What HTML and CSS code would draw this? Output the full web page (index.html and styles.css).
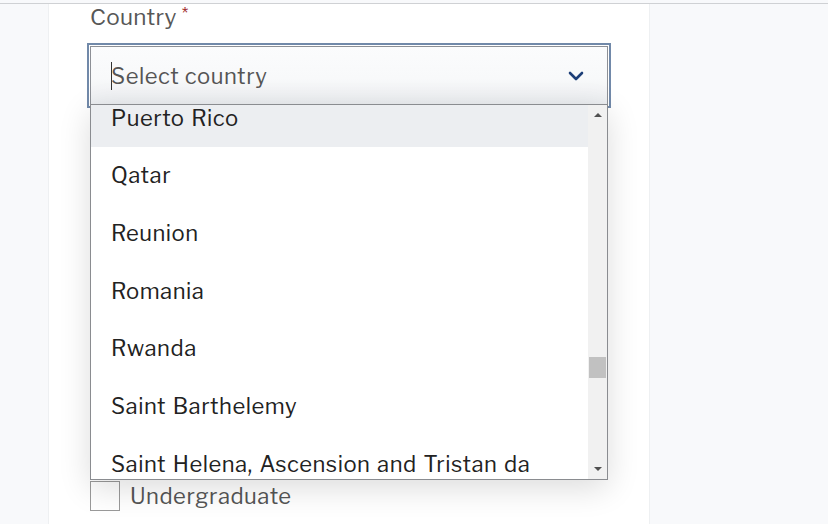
FILE: index.html
```html
<!DOCTYPE html>
<html lang="en">
<head>
<meta charset="utf-8">
<title>Country select</title>
<link rel="stylesheet" href="styles.css">
</head>
<body>
<div class="page">
  <aside class="side side-left"></aside>
  <main class="content">
    <div class="field">
      <label class="label">Country <span class="req">*</span></label>
      <div class="select-wrap">
        <div class="select">
          <span class="caret"></span>
          <span class="placeholder">Select country</span>
          <svg class="chev" width="16" height="10" viewBox="0 0 16 10"><path d="M2 2 L8 8 L14 2" fill="none" stroke="#1d3f78" stroke-width="2.6" stroke-linecap="round" stroke-linejoin="round"/></svg>
        </div>
        <div class="dropdown">
          <div class="options">
            <ul class="list">
              <li class="opt active">Puerto Rico</li>
              <li class="opt">Qatar</li>
              <li class="opt">Reunion</li>
              <li class="opt">Romania</li>
              <li class="opt">Rwanda</li>
              <li class="opt">Saint Barthelemy</li>
              <li class="opt wrap">Saint Helena, Ascension and Tristan da Cunha</li>
            </ul>
          </div>
          <div class="scrollbar">
            <span class="arrow up"></span>
            <div class="track"><div class="thumb"></div></div>
            <span class="arrow down"></span>
          </div>
        </div>
      </div>
    </div>
    <div class="check-row">
      <span class="checkbox"></span>
      <span class="check-label">Undergraduate</span>
    </div>
  </main>
  <aside class="side side-right"></aside>
</div>
</body>
</html>
```
FILE: styles.css
```css
* { box-sizing: border-box; }
html, body { margin: 0; padding: 0; }
body {
  font-family: "Libre Franklin", "Liberation Sans", Arial, sans-serif;
  background: #f8f9fb;
  width: 828px;
  height: 524px;
  overflow: hidden;
}
.page {
  margin-top: 3px;
  border-top: 1px solid #cfd1d4;
  display: grid;
  grid-template-columns: 49px 600px 1fr;
  height: 521px;
}
.side { background: #f8f9fb; }
.side-left { border-right: 1px solid #eef0f2; }
.side-right { border-left: 1px solid #eef0f2; }
.content {
  background: #fff;
  padding: 0 0 0 41px;
}
.field { display: flex; flex-direction: column; }
.label {
  font-size: 22.5px;
  color: #575757;
  line-height: 24px;
  margin-top: 1px;
  letter-spacing: 0.3px;
  height: 24px;
}
.req {
  color: #a02c2c;
  font-size: 17px;
  line-height: 0;
  position: relative;
  top: -6px;
}
.select-wrap {
  position: relative;
  margin-top: 17px;
  width: 518px;
}
.select {
  height: 59px;
  border: 1px solid #8d9096;
  outline: 2px solid #7189a9;
  outline-offset: 1px;
  background: linear-gradient(#fbfcfd 0%, #f8f9fa 55%, #eceef1 100%);
  display: flex;
  align-items: center;
  padding: 0 20px 0 20px;
  position: relative;
}
.caret {
  width: 1px;
  height: 28px;
  background: #333;
  margin-right: -1px;
}
.placeholder {
  font-size: 22px;
  color: #555;
  flex: 1;
  letter-spacing: 0.55px;
}
.chev { margin-right: 3px; margin-top: 1px; }
.dropdown {
  position: absolute;
  left: 0;
  top: 58px;
  width: 518px;
  height: 376px;
  border: 1px solid #8a8c90;
  background: #fff;
  display: flex;
  box-shadow: 0 8px 30px rgba(0,0,0,0.14);
  z-index: 5;
}
.options {
  flex: 1;
  overflow: hidden;
}
.list {
  list-style: none;
  margin: -16px 0 0 0;
  padding: 0;
}
.opt {
  height: 57.6px;
  display: flex;
  align-items: center;
  padding-left: 20px;
  font-size: 22px;
  color: #222;
  white-space: nowrap;
  letter-spacing: 0.5px;
  word-spacing: 1.5px;
}
.opt.wrap {
  white-space: normal;
  height: auto;
  padding-top: 16px;
  padding-right: 40px;
  line-height: 26px;
}
.opt.active { background: #eceef1; }
.scrollbar {
  width: 19px;
  background: #f1f1f1;
  display: flex;
  flex-direction: column;
  align-items: center;
}
.arrow {
  width: 0; height: 0;
  border-left: 4px solid transparent;
  border-right: 4px solid transparent;
  margin: 8px 0;
}
.arrow.up { border-bottom: 4px solid #505050; }
.arrow.down { border-top: 4px solid #505050; }
.track { flex: 1; width: 100%; position: relative; }
.thumb {
  position: absolute;
  left: 1px; right: 1px;
  top: 232px;
  height: 21px;
  background: #c1c1c1;
}
.check-row {
  display: flex;
  align-items: center;
  margin-top: 376px;
}
.checkbox {
  width: 30px;
  height: 30px;
  border: 1px solid #9a9a9a;
  background: #fff;
}
.check-label {
  font-size: 22px;
  color: #555;
  margin-left: 10px;
  letter-spacing: 0.5px;
}
```
